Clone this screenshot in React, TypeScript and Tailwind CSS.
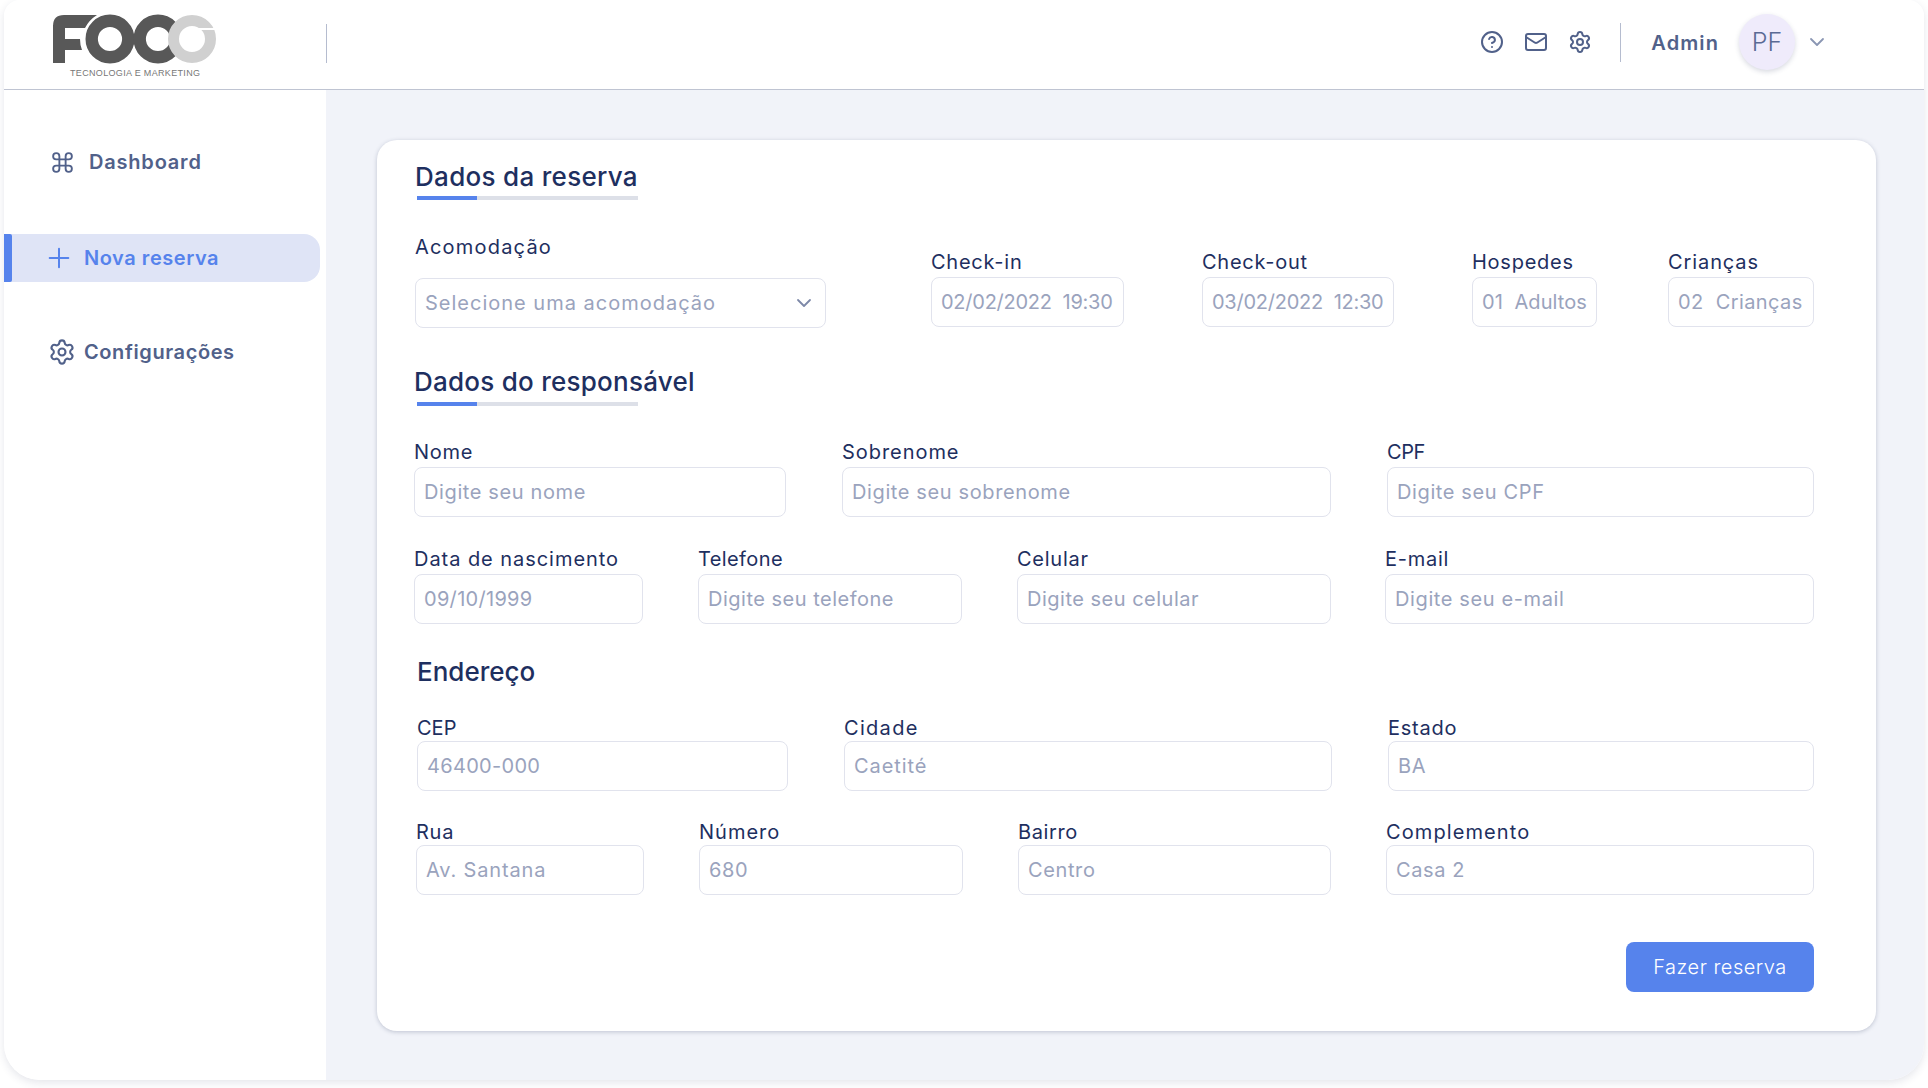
import { ChevronDown, CircleHelp, Command, Mail, Plus, Settings } from "lucide-react";

function Field({ label, placeholder, box, labelGap = "mb-px", labelTrack = "tracking-[0.75px]", textTrack = "tracking-[0.62px]" }: { label: string; placeholder: string; box: string; labelGap?: string; labelTrack?: string; textTrack?: string }) {
  return (
    <div className={box}>
      <label className={`block h-7 text-[20px] leading-7 text-[#1e2f60] whitespace-nowrap ${labelTrack} ${labelGap}`}>{label}</label>
      <input
        readOnly
        placeholder={placeholder}
        className={`block h-[50px] w-full rounded-lg border border-[#e1e3ed] bg-white pl-[9px] pr-0 text-[20px] text-[#9aa3bd] outline-none placeholder:text-[#9aa3bd] ${textTrack}`}
      />
    </div>
  );
}

function Underline({ className }: { className: string }) {
  return (
    <div className={`flex h-1 w-[221px] bg-[#dde0e8] ${className}`}>
      <div className="h-1 w-[60px] bg-[#5683ec]" />
    </div>
  );
}

function Logo() {
  return (
    <svg viewBox="50 10 170 70" className="h-[70px] w-[170px]">
      <circle cx="110" cy="39" r="18.3" fill="none" stroke="#585858" strokeWidth="12.4" />
      <path d="M53 63 V26 Q53 15 64 15 H97 Q89 20 85 28 H65 V39 H80 Q80 45 82 50 H65 V63 Z" fill="#585858" />
      <circle cx="158" cy="39" r="18.3" fill="none" stroke="#585858" strokeWidth="12.4" />
      <circle cx="192" cy="39" r="18.5" fill="#fff" stroke="#d0d0d0" strokeWidth="11" />
      <rect x="197" y="28" width="22" height="2" fill="#fff" />
      <text x="70" y="75.5" fontSize="9" fill="#777" textLength="130" fontFamily="'Liberation Sans', sans-serif">TECNOLOGIA E MARKETING</text>
    </svg>
  );
}

export default function App() {
  return (
    <div className="h-[1088px] w-[1928px] bg-white px-1 pb-2 font-['Inter',sans-serif]">
      <div className="flex h-[1080px] flex-col overflow-hidden rounded-t-[16px] rounded-b-[36px] shadow-[0_3px_8px_rgba(40,50,90,0.12)]">
        <header className="flex h-[90px] shrink-0 items-center border-b border-[#bfc4d2] bg-white text-[#51618a]">
          <div className="ml-[46px]">
            <Logo />
          </div>
          <div className="mb-[2px] ml-[106px] h-[39px] w-px bg-[#b5bccf]" />
          <div className="mb-[5px] ml-auto flex items-center">
            <CircleHelp size={24} strokeWidth={2} />
            <Mail size={24} strokeWidth={2} className="ml-5" />
            <Settings size={24} strokeWidth={2} className="ml-5" />
            <div className="ml-[28px] h-[39px] w-px bg-[#b5bccf]" />
            <span className="ml-[30px] pt-px text-[20px] font-semibold tracking-[1.1px]">Admin</span>
            <div className="ml-[20px] flex h-14 w-14 items-center justify-center rounded-full bg-[#efebfb] pt-[2px] text-[25px] font-light text-[#5a6a94] shadow-[0_2px_5px_rgba(40,50,90,0.18)]">PF</div>
            <ChevronDown size={24} strokeWidth={1.8} className="ml-[10px] mr-[95px] text-[#8a96b3]" />
          </div>
        </header>
        <div className="flex flex-1">
          <aside className="w-[322px] shrink-0 bg-white pt-12 text-[20px] font-semibold text-[#51618a]">
            <div className="flex h-12 items-center pl-[46px]">
              <Command size={25} strokeWidth={1.8} />
              <span className="ml-[14px] tracking-[0.8px]">Dashboard</span>
            </div>
            <div className="relative mt-12 flex h-12 w-[316px] items-center rounded-r-[16px] bg-[#dfe4f6] pl-[39px] text-[#5683ec]">
              <div className="absolute left-0 top-0 h-12 w-2 rounded-r-[2px] bg-[#5683ec]" />
              <Plus size={32} strokeWidth={1.5} />
              <span className="ml-[9px] tracking-[0.55px]">Nova reserva</span>
            </div>
            <div className="mt-[46px] flex h-12 items-center pl-[44px]">
              <Settings size={28} strokeWidth={1.8} />
              <span className="ml-[8px] tracking-[0.6px]">Configurações</span>
            </div>
          </aside>
          <main className="flex-1 bg-[#f1f3f9] pl-[51px] pt-[50px]">
            <div className="h-[891px] w-[1499px] rounded-[20px] bg-white pt-[21px] shadow-[0_1px_4px_rgba(40,50,90,0.25)]">
              <h2 className="ml-[38px] text-[26px] font-medium leading-8 tracking-[0.3px] text-[#1e2f60]">Dados da reserva</h2>
              <Underline className="ml-10 mt-[3px]" />

              <div className="mt-[33px] flex items-end">
                <div className="ml-[38px] w-[411px]">
                  <label className="mb-[17px] block h-7 text-[20px] leading-7 tracking-[1.2px] text-[#1e2f60]">Acomodação</label>
                  <div className="flex h-[50px] items-center justify-between rounded-lg border border-[#e1e3ed] px-[9px] text-[20px] tracking-[1px] text-[#9aa3bd]">
                    <span>Selecione uma acomodação</span>
                    <ChevronDown size={24} strokeWidth={1.8} className="text-[#7d88a8]" />
                  </div>
                </div>
                <Field label="Check-in" placeholder="02/02/2022  19:30" box="mb-px ml-[105px] w-[193px]" textTrack="tracking-[-0.25px]" />
                <Field label="Check-out" placeholder="03/02/2022  12:30" box="mb-px ml-[78px] w-[192px]" textTrack="tracking-[-0.25px]" />
                <Field label="Hospedes" placeholder="01  Adultos" box="mb-px ml-[78px] w-[125px]" textTrack="tracking-[0.1px]" />
                <Field label="Crianças" placeholder="02  Crianças" box="mb-px ml-[71px] w-[146px]" textTrack="tracking-[0.4px]" labelTrack="tracking-[0.9px]" />
              </div>

              <h2 className="ml-[37px] mt-[38px] text-[26px] font-medium leading-8 tracking-[0.25px] text-[#1e2f60]">Dados do responsável</h2>
              <Underline className="ml-10 mt-1" />

              <div className="mt-8 flex">
                <Field label="Nome" placeholder="Digite seu nome" box="ml-[37px] w-[372px]" />
                <Field label="Sobrenome" placeholder="Digite seu sobrenome" box="ml-[56px] w-[489px]" labelTrack="tracking-[0.95px]" />
                <Field label="CPF" placeholder="Digite seu CPF" box="ml-[56px] w-[427px]" labelTrack="tracking-[-0.4px]" />
              </div>
              <div className="mt-7 flex">
                <Field label="Data de nascimento" placeholder="09/10/1999" box="ml-[37px] w-[229px]" labelTrack="tracking-[0.95px]" textTrack="tracking-[0.3px]" />
                <Field label="Telefone" placeholder="Digite seu telefone" box="ml-[55px] w-[264px]" labelTrack="tracking-[0.4px]" textTrack="tracking-[0.5px]" />
                <Field label="Celular" placeholder="Digite seu celular" box="ml-[55px] w-[314px]" textTrack="tracking-[0.5px]" />
                <Field label="E-mail" placeholder="Digite seu e-mail" box="ml-[54px] w-[429px]" />
              </div>

              <h2 className="ml-10 mt-8 text-[26px] font-medium leading-8 text-[#1e2f60]">Endereço</h2>

              <div className="mt-[26px] flex">
                <Field label="CEP" placeholder="46400-000" box="ml-10 w-[371px]" labelGap="-mb-px" labelTrack="tracking-[0px]" textTrack="tracking-[0.3px]" />
                <Field label="Cidade" placeholder="Caetité" box="ml-[56px] w-[488px]" labelGap="-mb-px" labelTrack="tracking-[1.3px]" textTrack="tracking-[0.9px]" />
                <Field label="Estado" placeholder="BA" box="ml-[56px] w-[426px]" labelGap="-mb-px" />
              </div>
              <div className="mt-[27px] flex">
                <Field label="Rua" placeholder="Av. Santana" box="ml-[39px] w-[228px]" labelGap="-mb-px" textTrack="tracking-[0.85px]" />
                <Field label="Número" placeholder="680" box="ml-[55px] w-[264px]" labelGap="-mb-px" labelTrack="tracking-[1px]" />
                <Field label="Bairro" placeholder="Centro" box="ml-[55px] w-[313px]" labelGap="-mb-px" labelTrack="tracking-[0.6px]" />
                <Field label="Complemento" placeholder="Casa 2" box="ml-[55px] w-[428px]" labelGap="-mb-px" labelTrack="tracking-[1.1px]" />
              </div>

              <div className="mt-[47px] flex justify-end pr-[62px]">
                <button className="h-[50px] w-[188px] rounded-lg bg-[#5683ec] text-[20px] font-light tracking-[0.5px] text-white">Fazer reserva</button>
              </div>
            </div>
          </main>
        </div>
      </div>
    </div>
  );
}
